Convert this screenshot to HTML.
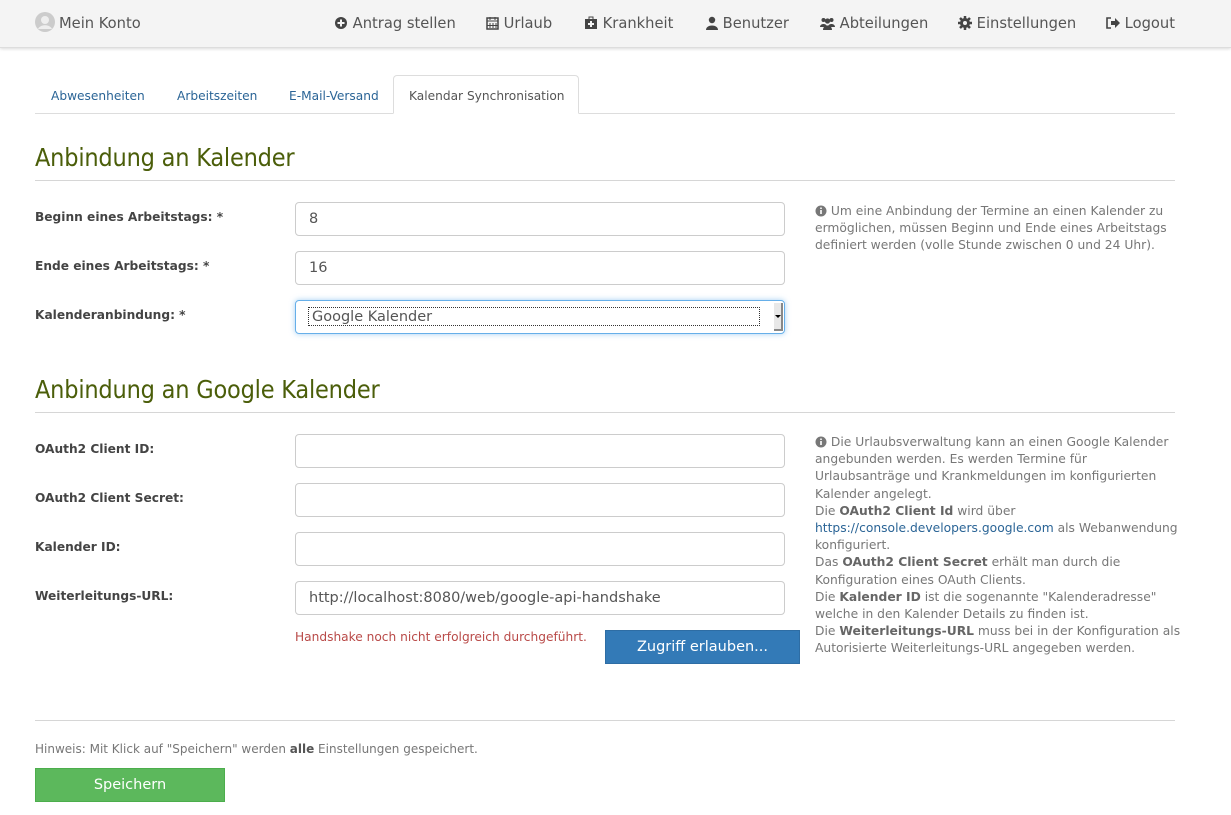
<!DOCTYPE html>
<html><head><meta charset="utf-8"><style>
*{box-sizing:border-box;margin:0;padding:0}
body{width:1231px;height:815px;background:#fff;font-family:"DejaVu Sans","Liberation Sans",sans-serif;color:#555;position:relative;overflow:hidden}
.a{position:absolute;white-space:nowrap}
.nav{position:absolute;left:0;top:0;width:1231px;height:48px;background:#f4f4f4;border-bottom:1px solid #ddd;box-shadow:0 1px 3px rgba(0,0,0,.15)}
.nav .a{top:15px;font-size:14.7px;color:#555}
.tab{top:89px;font-size:12.2px;color:#2a6496}
h2{position:absolute;left:35px;font-weight:normal;font-size:25px;color:#4b5e0a;font-family:"DejaVu Sans Condensed","DejaVu Sans",sans-serif;letter-spacing:-0.2px}
.hr{position:absolute;left:35px;width:1140px;height:1px;background:#d6d6d6}
.lbl{position:absolute;left:35px;font-size:12.2px;font-weight:bold;color:#444}
.inp{position:absolute;left:295px;width:490px;height:34px;border:1px solid #ccc;border-radius:4px;font-size:14.5px;color:#555;padding:8px 13px}
.help{position:absolute;left:815px;font-size:12.3px;line-height:17.2px;color:#777;white-space:nowrap}
.help b{color:#666}
svg{vertical-align:-2px}
</style></head><body>
<div class="nav">
<div class="a" style="left:35px;top:12px"><svg width="20" height="20" viewBox="0 0 20 20"><circle cx="10" cy="10" r="10" fill="#ccc"/><circle cx="10" cy="8" r="4" fill="#eee"/><path d="M3 17c2-5 12-5 14 0" fill="#eee"/></svg></div>
<div class="a" style="left:59px">Mein Konto</div>
<div class="a" style="left:334px"><svg width="14" height="14" viewBox="0 0 14 14"><circle cx="7" cy="7" r="6" fill="#444"/><path d="M7 3.5v7M3.5 7h7" stroke="#f4f4f4" stroke-width="2"/></svg> Antrag stellen</div>
<div class="a" style="left:486px"><svg width="13" height="14" viewBox="0 0 13 14"><rect x="1" y="2" width="11" height="11" fill="none" stroke="#444" stroke-width="1.5"/><path d="M1 5h11M4 1v3M9 1v3M4 7v5M7 7v5M10 7v5M1 9.5h11" stroke="#444"/></svg> Urlaub</div>
<div class="a" style="left:584px"><svg width="14" height="14" viewBox="0 0 14 14"><rect x="1" y="3" width="12" height="10" fill="#444"/><rect x="5" y="1" width="4" height="3" fill="none" stroke="#444"/><path d="M7 5v6M4 8h6" stroke="#f4f4f4" stroke-width="2"/></svg> Krankheit</div>
<div class="a" style="left:706px"><svg width="12" height="14" viewBox="0 0 12 14"><circle cx="6" cy="4" r="3.2" fill="#444"/><path d="M0 14c0-6 12-6 12 0z" fill="#444"/></svg> Benutzer</div>
<div class="a" style="left:820px"><svg width="15" height="14" viewBox="0 0 15 14"><circle cx="3.5" cy="4" r="2" fill="#444"/><circle cx="11.5" cy="4" r="2" fill="#444"/><circle cx="7.5" cy="5" r="2.6" fill="#444"/><path d="M0 11c0-4 7-4 7 0zM8 11c0-4 7-4 7 0zM3 14c0-6 9-6 9 0z" fill="#444"/></svg> Abteilungen</div>
<div class="a" style="left:958px"><svg width="14" height="14" viewBox="0 0 14 14"><circle cx="7" cy="7" r="5" fill="#444"/><path d="M7 0v14M0 7h14M2 2l10 10M12 2L2 12" stroke="#444" stroke-width="2.5"/><circle cx="7" cy="7" r="2" fill="#f4f4f4"/></svg> Einstellungen</div>
<div class="a" style="left:1106px"><svg width="14" height="14" viewBox="0 0 14 14"><path d="M5 2H1v10h4" fill="none" stroke="#444" stroke-width="1.6"/><path d="M5 5h4V2l5 5-5 5V9H5z" fill="#444"/></svg> Logout</div>
</div>

<div class="hr" style="top:113px;background:#ddd"></div>
<div class="a" style="left:393px;top:75px;width:186px;height:39px;border:1px solid #ddd;border-bottom:1px solid #fff;border-radius:4px 4px 0 0;background:#fff"></div>
<div class="a tab" style="left:51px">Abwesenheiten</div>
<div class="a tab" style="left:177px">Arbeitszeiten</div>
<div class="a tab" style="left:289px">E-Mail-Versand</div>
<div class="a tab" style="left:409px;color:#555">Kalendar Synchronisation</div>

<h2 style="top:143px">Anbindung an Kalender</h2>
<div class="hr" style="top:180px"></div>
<div class="lbl" style="top:210px">Beginn eines Arbeitstags: *</div>
<div class="inp" style="top:202px">8</div>
<div class="lbl" style="top:259px">Ende eines Arbeitstags: *</div>
<div class="inp" style="top:251px">16</div>
<div class="lbl" style="top:308px">Kalenderanbindung: *</div>
<div class="inp" style="top:300px;border-color:#66afe9;box-shadow:0 0 6px rgba(102,175,233,.6);padding:6px 12px">
<div style="border:1px dotted #333;height:19px;width:452px;font-size:14.5px;line-height:18px;padding-left:3px">Google Kalender</div>
<div style="position:absolute;right:1px;top:2px;width:9px;height:28px;background:#e8e8e8;border-right:2px solid #888;border-bottom:2px solid #888"><div style="position:absolute;left:1px;top:12px;border-left:3px solid transparent;border-right:3px solid transparent;border-top:3px solid #000"></div></div>
</div>
<div class="help" style="top:203px"><svg width="12" height="12" viewBox="0 0 12 12"><circle cx="6" cy="6" r="5.5" fill="#777"/><path d="M6 5v4M6 2.5v1.5" stroke="#fff" stroke-width="1.6"/></svg> Um eine Anbindung der Termine an einen Kalender zu<br>ermöglichen, müssen Beginn und Ende eines Arbeitstags<br>definiert werden (volle Stunde zwischen 0 und 24 Uhr).</div>

<h2 style="top:375px">Anbindung an Google Kalender</h2>
<div class="hr" style="top:412px"></div>
<div class="lbl" style="top:442px">OAuth2 Client ID:</div>
<div class="inp" style="top:434px"></div>
<div class="lbl" style="top:491px">OAuth2 Client Secret:</div>
<div class="inp" style="top:483px"></div>
<div class="lbl" style="top:540px">Kalender ID:</div>
<div class="inp" style="top:532px"></div>
<div class="lbl" style="top:589px">Weiterleitungs-URL:</div>
<div class="inp" style="top:581px">http://localhost:8080/web/google-api-handshake</div>
<div class="a" style="left:295px;top:630px;font-size:12.2px;color:#b94a48">Handshake noch nicht erfolgreich durchgeführt.</div>
<div class="a" style="left:605px;top:630px;width:195px;height:34px;background:#337ab7;border:1px solid #2e6da4;color:#fff;font-size:14.5px;text-align:center;line-height:32px">Zugriff erlauben...</div>
<div class="help" style="top:434px"><svg width="12" height="12" viewBox="0 0 12 12"><circle cx="6" cy="6" r="5.5" fill="#777"/><path d="M6 5v4M6 2.5v1.5" stroke="#fff" stroke-width="1.6"/></svg> Die Urlaubsverwaltung kann an einen Google Kalender<br>angebunden werden. Es werden Termine für<br>Urlaubsanträge und Krankmeldungen im konfigurierten<br>Kalender angelegt.<br>Die <b>OAuth2 Client Id</b> wird über<br><span style="color:#2a6496">https://console.developers.google.com</span> als Webanwendung<br>konfiguriert.<br>Das <b>OAuth2 Client Secret</b> erhält man durch die<br>Konfiguration eines OAuth Clients.<br>Die <b>Kalender ID</b> ist die sogenannte "Kalenderadresse"<br>welche in den Kalender Details zu finden ist.<br>Die <b>Weiterleitungs-URL</b> muss bei in der Konfiguration als<br>Autorisierte Weiterleitungs-URL angegeben werden.</div>

<div class="hr" style="top:720px"></div>
<div class="a" style="left:35px;top:742px;font-size:12px;color:#777">Hinweis: Mit Klick auf "Speichern" werden <b style="color:#555">alle</b> Einstellungen gespeichert.</div>
<div class="a" style="left:35px;top:768px;width:190px;height:34px;background:#5cb85c;border:1px solid #4cae4c;color:#fff;font-size:14.5px;text-align:center;line-height:33px">Speichern</div>
</body></html>
